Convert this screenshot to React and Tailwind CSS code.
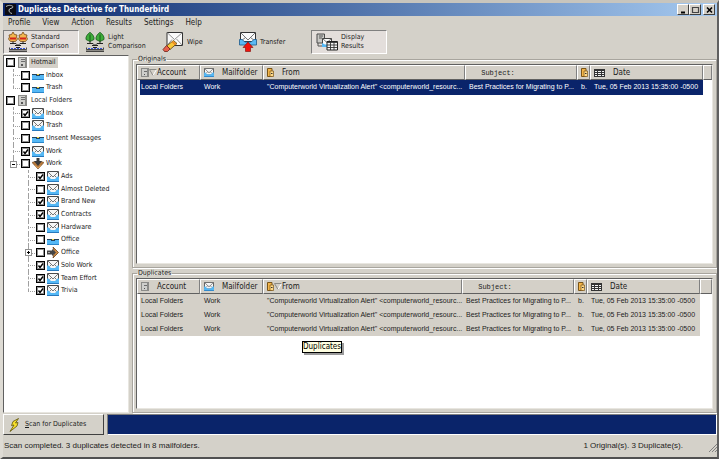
import React, { useState } from 'react';

const MENU = ['Profile', 'View', 'Action', 'Results', 'Settings', 'Help'];

const TREE = [
  { id: 'hotmail',        label: 'Hotmail',         depth: 0, icon: 'server', current: true },
  { id: 'hotmail-inbox',  label: 'Inbox',           depth: 1, icon: 'tray' },
  { id: 'hotmail-trash',  label: 'Trash',           depth: 1, icon: 'tray', last: true },
  { id: 'local',          label: 'Local Folders',   depth: 0, icon: 'server' },
  { id: 'inbox',          label: 'Inbox',           depth: 1, icon: 'mail', checked: true },
  { id: 'trash',          label: 'Trash',           depth: 1, icon: 'mail' },
  { id: 'unsent',         label: 'Unsent Messages', depth: 1, icon: 'tray' },
  { id: 'work',           label: 'Work',            depth: 1, icon: 'mail', checked: true },
  { id: 'work-folder',    label: 'Work',            depth: 1, icon: 'open', expander: 'minus', last: true },
  { id: 'ads',            label: 'Ads',             depth: 2, icon: 'mail', checked: true },
  { id: 'almost-deleted', label: 'Almost Deleted',  depth: 2, icon: 'mail' },
  { id: 'brand-new',      label: 'Brand New',       depth: 2, icon: 'mail', checked: true },
  { id: 'contracts',      label: 'Contracts',       depth: 2, icon: 'mail', checked: true },
  { id: 'hardware',       label: 'Hardware',        depth: 2, icon: 'mail' },
  { id: 'office',         label: 'Office',          depth: 2, icon: 'tray' },
  { id: 'office-folder',  label: 'Office',          depth: 2, icon: 'closed', expander: 'plus' },
  { id: 'solo-work',      label: 'Solo Work',       depth: 2, icon: 'mail', checked: true },
  { id: 'team-effort',    label: 'Team Effort',     depth: 2, icon: 'mail', checked: true },
  { id: 'trivia',         label: 'Trivia',          depth: 2, icon: 'mail', checked: true, last: true },
];

const MESSAGE = {
  account: 'Local Folders',
  folder:  'Work',
  from:    '"Computerworld Virtualization Alert" <computerworld_resourc...',
  subject: 'Best Practices for Migrating to P...',
  body:    'b.',
  date:    'Tue, 05 Feb 2013 15:35:00 -0500',
};

/* ── Icons ── */

function Mail({ className = 'w-[12px] h-[11px]' }) {
  return (
    <svg viewBox="0 0 12 11" className={`${className} shrink-0`}>
      <path d="M.5 .5h11v8H.5z" fill="#f6f6f6" stroke="#4a4a4a" />
      <path d="M1 1l5 5 5-5M2.500 6.500l2-2M9.500 6.500l-2-2" fill="none" stroke="#6a6a6a" strokeWidth=".9" />
      <path d="M0 5.500h1.500L4 8h4l2.500-2.500H12V11H0z" fill="#55b8f5" />
      <path d="M0 10.500h12" stroke="#2779bd" />
    </svg>
  );
}

function Tray() {
  return (
    <svg viewBox="0 0 12 10" className="w-[12px] h-[10px] shrink-0" shapeRendering="crispEdges">
      <rect x="0" y="4" width="12" height="6" fill="#55b8f5" />
      <path d="M0 4h12v1H8v1H4V5H0z" fill="#25435c" />
      <rect x="5" y="4" width="2" height="1" fill="#f2d640" />
      <rect x="0" y="9" width="12" height="1" fill="#2b86ca" />
    </svg>
  );
}

function Server({ className = 'w-[9px] h-[11px]' }) {
  return (
    <svg viewBox="0 0 9 11" className={`${className} shrink-0`} shapeRendering="crispEdges">
      <path d="M0 0h9v11H0z" fill="#8b8b88" />
      <path d="M1 1h6v9H1z" fill="#cfcfcc" />
      <path d="M3 2h4v1H3zM3 4h4v1H3z" fill="#6d6d6d" />
      <path d="M3 7h2v2H3z" fill="#555" />
    </svg>
  );
}

function OpenFolder() {
  return (
    <svg viewBox="0 0 12 11" className="w-[12px] h-[11px] shrink-0">
      <path d="M0 4.500l3-1 3 2 3-2 3 1L6 11z" fill="#b87a3c" stroke="#6b3f17" strokeWidth=".6" />
      <path d="M4.500 0h3v3H10L6 8 2 3h2.500z" fill="#3a3a3a" />
      <path d="M3 7.500L6 10l3-2.500" stroke="#e0a35c" fill="none" />
    </svg>
  );
}

function ClosedFolder() {
  return (
    <svg viewBox="0 0 12 11" className="w-[12px] h-[11px] shrink-0">
      <path d="M6 0l5.500 5.500L6 11l1-4V4z" fill="#c98a45" stroke="#6b3f17" strokeWidth=".8" />
      <path d="M0 3.500h5V2l4 3.500L5 9V7.500H0z" fill="#444" />
      <path d="M1 5h2v1H1z" fill="#aaa" />
    </svg>
  );
}

function Door() {
  return (
    <svg viewBox="0 0 7 9" className="w-[7px] h-[9px] shrink-0">
      <path d="M.5.5h4.500v8h-4.500z" fill="#f3b54a" stroke="#7a5518" />
      <path d="M3 3h3.500v5.500H3z" fill="#ffd988" stroke="#7a5518" strokeWidth=".7" />
      <path d="M4 5.500h1.500" stroke="#333" />
    </svg>
  );
}

function Calendar() {
  return (
    <svg viewBox="0 0 11 8" className="w-[11px] h-[8px] shrink-0" shapeRendering="crispEdges">
      <path d="M0 0h11v8H0z" fill="#333" />
      <path d="M1 2h2v1H1zM4 2h3v1H4zM8 2h2v1H8zM1 4h2v1H1zM4 4h3v1H4zM8 4h2v1H8zM1 6h2v1H1zM4 6h3v1H4zM8 6h2v1H8z" fill="#f3f3f3" />
    </svg>
  );
}

function SortArrow() {
  return (
    <svg viewBox="0 0 8 7" className="w-[8px] h-[7px] shrink-0">
      <path d="M7.500 .5L4 6.500" stroke="#fff" fill="none" />
      <path d="M4 6.500L.5 .5h7" stroke="#8a8a86" fill="none" />
    </svg>
  );
}

// two trees standing on the mail scale; only the crown changes between modes
function Scale({ crown }) {
  const autumn = crown === 'autumn';
  return (
    <svg viewBox="0 0 20 20" className="w-[20px] h-[20px] shrink-0">
      {[0, 10].map((x) => (
        <g key={x} transform={`translate(${x} 0)`}>
          {autumn ? (
            <>
              <path d="M5 0l1.500 2.500L9 3l-.5 2 1 2-2 2.500h-5L.5 7l1-2L1 3l2.500-.5z" fill="#f0b54e" stroke="#7a4a16" strokeWidth=".8" />
              <path d="M2 5.500h6v2H2z" fill="#d3221b" />
            </>
          ) : (
            <>
              <path d="M5 .3C8 2.500 9.500 5 9 7.500L5 9.500L1 7.500C.5 5 2 2.500 5 .3z" fill="#3fae3a" stroke="#17591a" strokeWidth=".8" />
              <path d="M5 2.500v7" stroke="#0d4310" strokeWidth=".8" />
            </>
          )}
          <path d="M5 9.500v2.500" stroke="#222" />
        </g>
      ))}
      <path d="M2 11.500h6l2 2 2-2h6M7 13.500h6M8 15.500h4" stroke="#222" fill="none" />
      <path d="M1.500 15.500v2h17v-2" stroke="#222" fill="none" strokeWidth=".8" />
      <path d="M3 16.500h14" stroke="#3652d8" strokeDasharray="2 1" />
      <path d="M1 19.200h18" stroke="#222" strokeWidth="1.200" />
    </svg>
  );
}

function Wipe() {
  return (
    <svg viewBox="0 0 22 20" className="w-[22px] h-[20px] shrink-0">
      <path d="M5 .5h15.500v13H5z" fill="#fafafa" stroke="#333" />
      <path d="M5 .5l7.500 7 8-7M20.500 13.500L14.500 7M5 13.500l5-6" stroke="#777" fill="none" strokeWidth=".8" />
      <path d="M11.500 8.500l3.500 3-7 6-3.500-3.500z" fill="#f9c838" stroke="#5a4010" strokeWidth=".8" />
      <path d="M11 9l3.500 3-1.500 1.300-3.500-3z" fill="#ec8a24" />
      <path d="M4.500 13.500l3.500 3.500-2.500 2.500H2.500L1 17.500z" fill="#e8604c" stroke="#6b2018" strokeWidth=".8" />
    </svg>
  );
}

function Transfer() {
  return (
    <svg viewBox="0 0 18 20" className="w-[18px] h-[20px] shrink-0">
      <path d="M1.500 .5h15v9h-15z" fill="#fafafa" stroke="#333" />
      <path d="M1.500 .5L9 8l7.500-7.500M2 9l4.500-3.500M16 9l-4.500-3.500" stroke="#666" fill="none" strokeWidth=".9" />
      <path d="M.5 7.500h2.500L6 10h6l3-2.500h2.500v5.500H.5z" fill="#5bb9f4" stroke="#1d5b8c" strokeWidth=".8" />
      <path d="M9 10l5 5.500h-2.500v4h-5v-4H4z" fill="#f2140c" stroke="#7d0905" strokeWidth=".6" />
    </svg>
  );
}

function Display() {
  return (
    <svg viewBox="0 0 22 18" className="w-[22px] h-[18px] shrink-0">
      <path d="M1 1h7.500v9H1z" fill="#c9c9c6" stroke="#4a4a4a" />
      <path d="M3 3h4M3 5h3" stroke="#555" />
      <path d="M2 10v3h4" stroke="#555" fill="none" />
      <path d="M6.500 5.500h9v8h-9z" fill="#fafafa" stroke="#444" />
      <path d="M6.500 5.500l4.500 4 4.500-4" stroke="#555" fill="none" strokeWidth=".8" />
      <path d="M6 10l3 1.500h3v2.500H6z" fill="#55b8f5" />
      <path d="M11 8.500h10.500v8.500H11z" fill="#f6f6f6" stroke="#222" />
      <path d="M11 9.500h10.500M11 12h10.500M11 14.500h10.500M14.500 9v8M18 9v8" stroke="#333" strokeWidth=".9" />
    </svg>
  );
}

function Bolt() {
  return (
    <svg viewBox="0 0 12 14" className="w-[12px] h-[14px] shrink-0">
      <path d="M9.500 .5L4 3.500l-1.500 4 2.500-.5-4 6.500 7-5.500 1-3.500-2.500.5z" fill="#f8e02c" stroke="#5d5208" strokeWidth=".8" />
    </svg>
  );
}

const ICONS = { server: Server, mail: Mail, tray: Tray, open: OpenFolder, closed: ClosedFolder };

/* ── Title bar ── */

function WindowButton({ label, children }) {
  return (
    <button aria-label={label}
      className="w-[12px] h-[11px] bg-[#d4d0c8] border border-t-white border-l-white border-r-[#404040] border-b-[#404040] flex items-center justify-center">
      <svg viewBox="0 0 9 8" className="w-[9px] h-[8px] shrink-0" fill="none" stroke="#000">{children}</svg>
    </button>
  );
}

function TitleBar() {
  return (
    <div className="h-[13px] shrink-0 flex items-center px-[2px] bg-linear-to-r from-[#0a246a] to-[#a6caf0]">
      <svg viewBox="0 0 11 11" className="w-[11px] h-[11px] shrink-0">
        <rect width="11" height="11" fill="#0b0b12" />
        <path d="M1 2.500c3-2 7-1 7 .5s-4 1-4 3 1 3 3 3.500" stroke="#b8c0c0" fill="none" />
      </svg>
      <h1 className="ml-[2px] flex-1 text-[8px] leading-[12px] font-bold text-white whitespace-nowrap">
        Duplicates Detective for Thunderbird
      </h1>
      <WindowButton label="Minimize"><path d="M2 6.500h4" strokeWidth="2" /></WindowButton>
      <WindowButton label="Maximize"><path d="M1 1.500h7M1.500 1v5.500h6V1" stroke="#444" strokeWidth="1.200" /></WindowButton>
      <div className="w-[2px]" />
      <WindowButton label="Close"><path d="M2 1.500l5 5M7 1.500l-5 5" strokeWidth="1.600" /></WindowButton>
    </div>
  );
}

/* ── Toolbar ── */

function ToolButton({ icon, pressed, children }) {
  return (
    <button aria-pressed={pressed}
      className={`w-[76px] h-[24px] pl-[4px] flex items-center gap-[3px] text-left border ${
        pressed
          ? 'bg-[#e3dedb] border-t-[#808080] border-l-[#808080] border-r-white border-b-white'
          : 'border-transparent'
      }`}>
      {icon}
      <span className="leading-[9px]">{children}</span>
    </button>
  );
}

/* ── Folder tree ── */

function Guide({ line, expander }) {
  return (
    <span className="relative w-[15px] self-stretch shrink-0">
      {line && (
        <>
          <span className={`absolute left-[7px] top-0 border-l border-dashed border-[#a0a0a0] ${line === 'last' ? 'h-1/2' : 'h-full'}`} />
          <span className="absolute left-[7px] right-px top-1/2 border-t border-dotted border-[#a0a0a0]" />
        </>
      )}
      {expander && (
        <button aria-label={expander === 'plus' ? 'Expand' : 'Collapse'}
          className="absolute left-[4px] top-[3px] w-[7px] h-[7px] bg-white border border-[#909090]">
          <svg viewBox="0 0 5 5" className="block w-[5px] h-[5px]" stroke="#000">
            <path d={expander === 'plus' ? 'M1 2.500h3M2.500 1v3' : 'M1 2.500h3'} />
          </svg>
        </button>
      )}
    </span>
  );
}

function TreeRow({ node, checked, onToggle }) {
  const Icon = ICONS[node.icon];
  return (
    <li className="flex-1 flex items-center pl-[2px]">
      {node.depth === 2 && <Guide />}
      {node.depth > 0 && <Guide line={node.last ? 'last' : 'full'} expander={node.expander} />}
      <label className="flex items-center">
        <span className="relative w-[9px] h-[9px] shrink-0">
          <input type="checkbox" checked={checked} onChange={onToggle}
            className="block appearance-none w-[9px] h-[9px] bg-white border border-black shadow-[inset_0_0_0_1px_#909090]" />
          {checked && (
            <svg viewBox="0 0 9 9" className="absolute inset-0 w-[9px] h-[9px] pointer-events-none">
              <path d="M2.500 4.500l1.500 2 3-4" stroke="#000" strokeWidth="1.400" fill="none" />
            </svg>
          )}
        </span>
        <span className="ml-px w-[13px] flex justify-center"><Icon /></span>
        <span className={`px-[2px] leading-[11px] whitespace-nowrap ${node.current ? 'bg-[#d4d0c8]' : ''}`}>
          {node.label}
        </span>
      </label>
    </li>
  );
}

/* ── Message tables ── */

function Th({ icon, sorted, mono, children }) {
  return (
    <th className="h-[15px] p-0 font-normal bg-[#d4d0c8] border border-t-white border-l-white border-r-[#808080] border-b-[#606060]">
      <div className="flex items-center pl-[3px]">
        {icon}
        {children && (
          <>
            <span className="w-[8px] shrink-0 flex">{sorted && <SortArrow />}</span>
            <span className={`whitespace-nowrap leading-[12px] ${mono ? "text-[7px] font-['Liberation_Mono',monospace]" : 'text-[8px]'}`}>
              {children}
            </span>
          </>
        )}
      </div>
    </th>
  );
}

function MessageTable({ title, rows, selected, sort, rowHeight, fillWidth, grow }) {
  const cell = `${rowHeight} py-0 pr-0 whitespace-nowrap`;
  return (
    <fieldset className={`${grow} min-h-0 min-w-0 flex flex-col border border-[#a8a59e] shadow-[inset_1px_1px_0_#fff,1px_1px_0_#fff] px-[3px] pb-[3px]`}>
      <legend className="ml-px px-px h-[9px] leading-[9px]">{title}</legend>
      <div className="flex-1 bg-white border border-t-[#606060] border-l-[#606060] border-r-[#e8e6e0] border-b-[#e8e6e0] overflow-hidden">
        <table className="w-full table-fixed border-separate border-spacing-0 text-left">
          <colgroup>
            <col className="w-[63px]" />
            <col className="w-[63px]" />
            <col />
            <col className="w-[112px]" />
            <col className="w-[13px]" />
            <col className="w-[113px]" />
            <col className={fillWidth} />
          </colgroup>
          <thead>
            <tr>
              <Th icon={<Server className="w-[8px] h-[9px]" />} sorted={sort === 'account'}>Account</Th>
              <Th icon={<Mail className="w-[10px] h-[9px]" />}>Mailfolder</Th>
              <Th icon={<Door />} sorted={sort === 'from'}>From</Th>
              <Th mono>&nbsp;Subject:</Th>
              <Th icon={<Door />} />
              <Th icon={<Calendar />}>Date</Th>
              <Th />
            </tr>
          </thead>
          <tbody className="font-['Liberation_Sans',sans-serif]">
            {rows.map((m, i) => (
              <tr key={i} className={selected ? 'bg-[#0a246a] text-white' : 'bg-[#d4d0c8]'}>
                <td className={`${cell} border-l-[3px] border-white pl-px`}>{m.account}</td>
                <td className={`${cell} pl-[4px]`}>{m.folder}</td>
                <td className={`${cell} pl-[4px]`}>{m.from}</td>
                <td className={`${cell} pl-[4px]`}>{m.subject}</td>
                <td className={`${cell} pl-[4px]`}>{m.body}</td>
                <td className={`${cell} pl-[4px]`}>{m.date}</td>
                <td className="bg-white p-0" />
              </tr>
            ))}
          </tbody>
        </table>
      </div>
    </fieldset>
  );
}

export default function App() {
  const [checked, setChecked] = useState(() => new Set(TREE.filter(n => n.checked).map(n => n.id)));

  const toggle = (id) => {
    const next = new Set(checked);
    if (next.has(id)) next.delete(id);
    else next.add(id);
    setChecked(next);
  };

  return (
    <div className="relative h-screen flex flex-col bg-[#d4d1c9] text-[#1c1c1c] text-[7px] font-['DejaVu_Sans_Condensed','Liberation_Sans',sans-serif] border-t-[3px] border-l-[3px] border-r-2 border-b-2 border-t-[#c8c5bd] border-l-[#dedbd4] border-r-[#606060] border-b-[#505050] overflow-hidden">
      <TitleBar />

      <nav className="h-[14px] shrink-0 flex items-center gap-[12px] px-[5px] text-[8px]">
        {MENU.map(item => <button key={item}>{item}</button>)}
      </nav>

      <div className="h-[24px] shrink-0 flex gap-px">
        <ToolButton icon={<Scale crown="autumn" />} pressed>Standard<br />Comparison</ToolButton>
        <ToolButton icon={<Scale crown="green" />}>Light<br />Comparison</ToolButton>
        <ToolButton icon={<Wipe />}>Wipe</ToolButton>
        <ToolButton icon={<Transfer />}>Transfer</ToolButton>
        <ToolButton icon={<Display />} pressed>Display<br />Results</ToolButton>
      </div>

      <main className="flex-1 min-h-0 flex gap-[3px] pt-px pb-px">
        <div className="w-[126px] shrink-0 bg-white border border-t-[#606060] border-l-[#606060] border-r-[#e8e6e0] border-b-[#e8e6e0]">
          <ul className="h-[241px] flex flex-col">
            {TREE.map(node => (
              <TreeRow key={node.id} node={node} checked={checked.has(node.id)} onToggle={() => toggle(node.id)} />
            ))}
          </ul>
        </div>

        <div className="flex-1 min-w-0 flex flex-col gap-px">
          <MessageTable title="Originals" rows={[MESSAGE]} selected sort="account"
            rowHeight="h-[15px]" fillWidth="w-[9px]" grow="flex-[3]" />
          <MessageTable title="Duplicates" rows={[MESSAGE, MESSAGE, MESSAGE]} sort="from"
            rowHeight="h-[14px]" fillWidth="w-[12px]" grow="flex-[2]" />
        </div>
      </main>

      <div className="h-[21px] shrink-0 flex gap-[3px]">
        <button className="w-[101px] pl-[5px] flex items-center gap-[4px] border border-t-white border-l-white border-r-[#404040] border-b-[#404040]">
          <Bolt />
          <span><u>S</u>can for Duplicates</span>
        </button>
        <div role="progressbar" aria-valuenow={100}
          className="flex-1 bg-[#0a246a] border border-t-[#808080] border-l-[#808080] border-r-white border-b-white" />
      </div>

      <footer className="h-[22px] shrink-0 flex items-center justify-between pl-px text-[8px] font-['Liberation_Sans',sans-serif]">
        <span>Scan completed. 3 duplicates detected in 8 mailfolders.</span>
        <span className="flex items-end gap-[26px]">
          1 Original(s). 3 Duplicate(s).
          <svg viewBox="0 0 8 8" className="w-[8px] h-[8px]" stroke="#808080">
            <path d="M0 8l8-8M3 8l5-5M6 8l2-2" />
          </svg>
        </span>
      </footer>

      <div role="tooltip"
        className="absolute left-[299px] top-[338px] text-[8px] leading-[10px] text-black bg-[#ffffe1] border border-black shadow-[2px_2px_0_#9a9a9a]">
        Duplicates
      </div>
    </div>
  );
}
